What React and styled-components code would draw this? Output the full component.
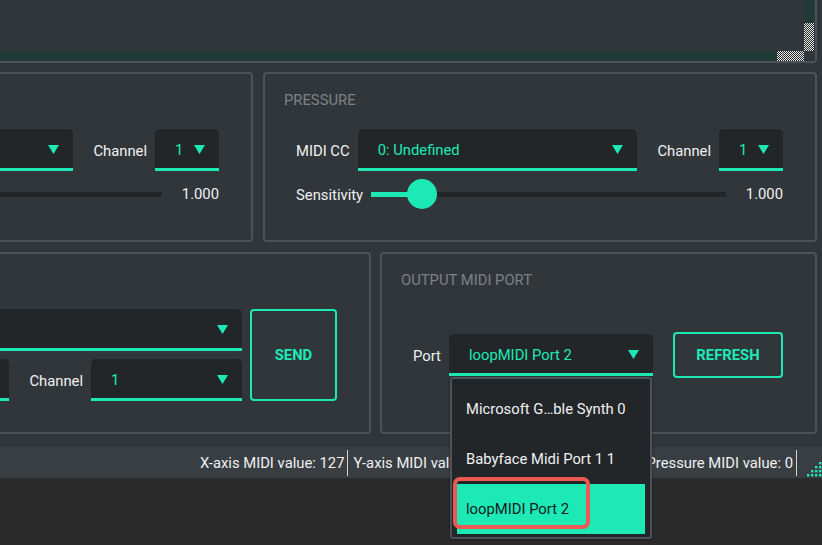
import React from 'react';
import styled, { createGlobalStyle } from 'styled-components';

const TEAL = '#1de9b6';
const BG = '#31363b';
const FIELD = '#232629';
const BORDER = '#4b5259';
const TEXT = '#eff0f1';
const MUTED = '#7c8187';
const FONT = 'Roboto, "Noto Sans", "Liberation Sans", sans-serif';
const SIZE = '14.8px';

const GlobalStyle = createGlobalStyle`
  html, body { margin: 0; padding: 0; background: #2b2b2b; overflow: hidden; }
  body { font-family: ${FONT}; font-size: ${SIZE}; color: ${TEXT}; }
  *, *::before, *::after { box-sizing: border-box; }
`;

const Screen = styled.div`
  position: relative;
  width: 822px;
  height: 545px;
  overflow: hidden;
  background: #2b2b2b;
`;

const Window = styled.div`
  width: 1128px;
  margin-left: -306px;
  background: ${BG};
  display: flex;
  flex-direction: column;
`;

const Content = styled.div`
  display: flex;
  flex-direction: column;
  gap: 9px;
  padding: 0 5px 13px;
`;

/* ---------- top scroll area ---------- */
const ScrollFrame = styled.div`
  margin-top: -100px;
  height: 163px;
  border: 2px solid ${BORDER};
  border-radius: 4px;
  display: grid;
  grid-template-columns: 1fr 11px;
  grid-template-rows: 1fr 10px;
`;

const Viewport = styled.div`
  background: ${BG};
`;

const ScrollTrack = styled.div`
  background: #213a35;
  display: flex;
  flex-direction: ${(p) => (p.$vertical ? 'column' : 'row')};
  justify-content: flex-end;
  ${(p) => (p.$vertical ? 'margin-right: 1px;' : '')}
`;

const ScrollHandle = styled.div`
  background: repeating-conic-gradient(#e6e6e6 0% 25%, #2a2a2a 0% 50%) 0 0 / 2px 2px;
  ${(p) => (p.$vertical ? 'height: 28px;' : 'width: 27px;')}
`;

const ScrollCorner = styled.div`
  background: ${BG};
`;

/* ---------- panels ---------- */
const Row = styled.div`
  display: flex;
  gap: ${(p) => p.$gap}px;
  margin-top: ${(p) => p.$mt || 0}px;
`;

const Panel = styled.section`
  border: 2px solid ${BORDER};
  border-radius: 4px;
  padding: 17px 32px 31px 19px;
  display: flex;
  flex-direction: column;
  ${(p) => (p.$width ? `flex: 0 0 ${p.$width}px;` : 'flex: 1 1 0; min-width: 0;')}
`;

const PanelTitle = styled.h3`
  margin: 0 0 20px;
  font: 400 ${SIZE}/18px ${FONT};
  color: ${MUTED};
  text-transform: uppercase;
  white-space: nowrap;
`;

const Form = styled.div`
  display: flex;
  flex-direction: ${(p) => (p.$row ? 'row' : 'column')};
  gap: 8px;
  padding-left: 12px;
  margin-top: ${(p) => p.$mt || 0}px;
`;

const FormColumn = styled.div`
  flex: 1 1 0;
  min-width: 0;
  display: flex;
  flex-direction: column;
  gap: 8px;
`;

const FieldRow = styled.div`
  display: flex;
  align-items: center;
  height: ${(p) => p.$h}px;
`;

const Label = styled.span`
  color: ${TEXT};
  white-space: nowrap;
  margin-right: 8px;
  margin-left: ${(p) => (p.$lead ? 20 : 0)}px;
  line-height: 18px;
  padding-top: 1px;
`;

const Value = styled.span`
  color: ${TEXT};
  margin-left: 20px;
  white-space: nowrap;
`;

const ComboBox = styled.div`
  display: flex;
  align-items: center;
  height: 42px;
  padding: 2px 14px 0 20px;
  background: ${FIELD};
  border-bottom: 3px solid ${TEAL};
  border-radius: 5px 5px 0 0;
  color: ${TEAL};
  ${(p) => (p.$width ? `flex: 0 0 ${p.$width}px;` : 'flex: 1 1 0; min-width: 0;')}
`;

const ComboText = styled.span`
  flex: 1 1 auto;
  min-width: 0;
  white-space: nowrap;
  overflow: hidden;
`;

const ArrowIcon = styled.svg`
  flex: 0 0 auto;
  display: block;
`;

const Arrow = () => (
  <ArrowIcon width="11" height="9" viewBox="0 0 11 9">
    <polygon points="0,0 11,0 5.5,9" fill={TEAL} />
  </ArrowIcon>
);

const Combo = ({ value, width }) => (
  <ComboBox $width={width}>
    <ComboText>{value}</ComboText>
    <Arrow />
  </ComboBox>
);

const SliderBox = styled.div`
  position: relative;
  flex: 1 1 0;
  min-width: 0;
  height: 30px;
  display: flex;
  align-items: center;
`;

const Track = styled.div`
  position: relative;
  width: 100%;
  height: 5px;
  background: ${FIELD};
`;

const Fill = styled.div`
  position: absolute;
  left: 0;
  top: 0;
  bottom: 0;
  background: ${TEAL};
`;

const Knob = styled.div`
  position: absolute;
  top: 50%;
  width: 30px;
  height: 30px;
  margin: -15px 0 0 -15px;
  border-radius: 50%;
  background: ${TEAL};
`;

const Slider = ({ pos }) => {
  const at = `calc(15px + ${pos} * (100% - 30px))`;
  return (
    <SliderBox>
      <Track>
        <Fill style={{ width: at }} />
        <Knob style={{ left: at }} />
      </Track>
    </SliderBox>
  );
};

const ActionButton = styled.button`
  flex: 0 0 ${(p) => p.$width}px;
  height: ${(p) => (p.$height ? `${p.$height}px` : 'auto')};
  margin-left: ${(p) => p.$ml || 0}px;
  padding: 0;
  background: transparent;
  border: 2px solid ${TEAL};
  border-radius: 4px;
  color: ${TEAL};
  font: 700 ${SIZE} ${FONT};
  cursor: pointer;
`;

const CCPanel = ({ title, cc, channel, pos }) => (
  <Panel>
    <PanelTitle>{title}</PanelTitle>
    <Form>
      <FieldRow $h={42}>
        <Label>MIDI CC</Label>
        <Combo value={cc} />
        <Label $lead>Channel</Label>
        <Combo value={channel} width={64} />
      </FieldRow>
      <FieldRow $h={30}>
        <Label>Sensitivity</Label>
        <Slider pos={pos} />
        <Value>1.000</Value>
      </FieldRow>
    </Form>
  </Panel>
);

/* ---------- status bar ---------- */
const StatusBar = styled.footer`
  height: 31px;
  background: #393e43;
  display: flex;
  align-items: center;
  justify-content: flex-end;
`;

const StatusItem = styled.span`
  padding: 0 3px 0 5px;
  white-space: nowrap;
  color: ${TEXT};
  overflow: hidden;
  ${(p) => (p.$width ? `width: ${p.$width}px;` : '')}
`;

const StatusSep = styled.span`
  width: 1px;
  height: 26px;
  background: #cfd1d3;
`;

const Grip = styled.div`
  width: 25px;
  align-self: stretch;
  display: flex;
  align-items: flex-end;
  justify-content: flex-end;
  padding-bottom: 1px;
`;

const GripIcon = () => {
  const dots = [];
  for (let r = 0; r < 4; r += 1) {
    for (let c = 0; c < 4; c += 1) {
      if (c + r >= 3) dots.push(<rect key={`${r}-${c}`} x={c * 4 + 1} y={r * 4 + 1} width="2.4" height="2.4" fill={TEAL} />);
    }
  }
  return (
    <svg width="16" height="16" viewBox="0 0 16 16">
      {dots}
    </svg>
  );
};

/* ---------- popup overlay ---------- */
const Popup = styled.ul`
  position: absolute;
  left: 450px;
  top: 377px;
  width: 202px;
  margin: 0;
  padding: 5px 5px 3px;
  list-style: none;
  background: ${FIELD};
  border: 2px solid ${BORDER};
  border-radius: 3px;
  box-shadow: 0 1px 3px rgba(0, 0, 0, 0.35);
`;

const PopupItem = styled.li`
  height: 50px;
  display: flex;
  align-items: center;
  padding-left: 9px;
  white-space: nowrap;
  color: ${(p) => (p.$selected ? '#15191b' : TEXT)};
  background: ${(p) => (p.$selected ? TEAL : 'transparent')};
`;

const Highlight = styled.div`
  position: absolute;
  left: 453px;
  top: 477px;
  width: 137px;
  height: 52px;
  border: 4px solid #ee5852;
  border-radius: 7px;
  pointer-events: none;
`;

const ports = ['Microsoft G…ble Synth 0', 'Babyface Midi Port 1 1', 'loopMIDI Port 2'];

export default function App() {
  return (
    <>
      <GlobalStyle />
      <Screen>
        <Window>
          <Content>
            <ScrollFrame>
              <Viewport />
              <ScrollTrack $vertical>
                <ScrollHandle $vertical />
              </ScrollTrack>
              <ScrollTrack>
                <ScrollHandle />
              </ScrollTrack>
              <ScrollCorner />
            </ScrollFrame>

            <Row $gap={10}>
              <CCPanel title="Y-Axis" cc="0: Undefined" channel="1" pos={0.3} />
              <CCPanel title="Pressure" cc="0: Undefined" channel="1" pos={0.111} />
            </Row>

            <Row $gap={9} $mt={1}>
              <Panel>
                <PanelTitle>Manual MIDI message</PanelTitle>
                <Form $row>
                  <FormColumn>
                    <FieldRow $h={42}>
                      <Label>Message</Label>
                      <Combo value="Control Change" />
                    </FieldRow>
                    <FieldRow $h={42}>
                      <Label>Value</Label>
                      <Combo value="0" />
                      <Label $lead>Channel</Label>
                      <Combo value="1" width={151} />
                    </FieldRow>
                  </FormColumn>
                  <ActionButton $width={87}>SEND</ActionButton>
                </Form>
              </Panel>
              <Panel $width={437}>
                <PanelTitle>Output MIDI port</PanelTitle>
                <Form $mt={23}>
                  <FieldRow $h={46}>
                    <Label>Port</Label>
                    <Combo value="loopMIDI Port 2" />
                    <ActionButton $width={110} $height={46} $ml={20}>REFRESH</ActionButton>
                  </FieldRow>
                </Form>
              </Panel>
            </Row>
          </Content>

          <StatusBar>
            <StatusItem>X-axis MIDI value: 127</StatusItem>
            <StatusSep />
            <StatusItem $width={292}>Y-axis MIDI value: 127</StatusItem>
            <StatusSep />
            <StatusItem>Pressure MIDI value: 0</StatusItem>
            <StatusSep />
            <Grip>
              <GripIcon />
            </Grip>
          </StatusBar>
        </Window>

        <Popup>
          {ports.map((p, i) => (
            <PopupItem key={p} $selected={i === 2}>
              {p}
            </PopupItem>
          ))}
        </Popup>
        <Highlight />
      </Screen>
    </>
  );
}
